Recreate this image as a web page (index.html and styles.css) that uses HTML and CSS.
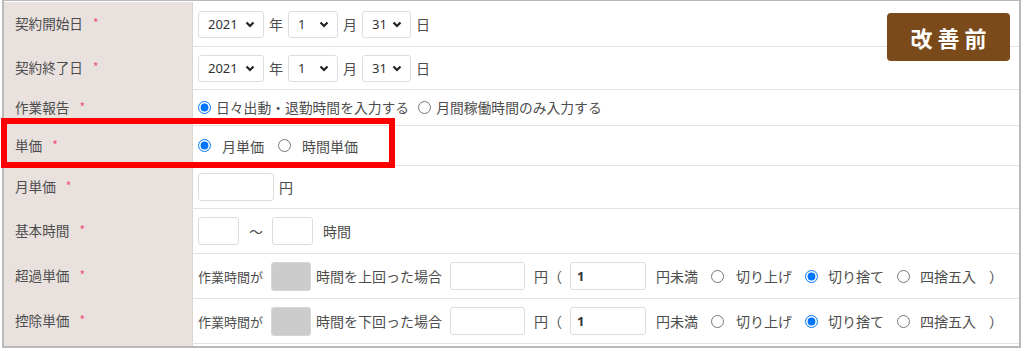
FILE: index.html
```html
<!DOCTYPE html>
<html lang="ja">

<head>
    <meta charset="UTF-8">
    <title>契約情報</title>
    <link rel="stylesheet" href="styles.css">
</head>

<body>
    <div class="frame">
        <div class="form">
            <div class="form-row row-1">
                <div class="form-label">契約開始日<span class="req">*</span></div>
                <div class="form-field">
                    <div class="select w-year">2021<svg viewBox="0 0 10 7"><path d="M1.5 1.5 5 5l3.5-3.5"/></svg></div>
                    <span class="unit">年</span>
                    <div class="select w-month">1<svg viewBox="0 0 10 7"><path d="M1.5 1.5 5 5l3.5-3.5"/></svg></div>
                    <span class="unit">月</span>
                    <div class="select w-day">31<svg viewBox="0 0 10 7"><path d="M1.5 1.5 5 5l3.5-3.5"/></svg></div>
                    <span class="unit">日</span>
                </div>
            </div>
            <div class="form-row row-2">
                <div class="form-label">契約終了日<span class="req">*</span></div>
                <div class="form-field">
                    <div class="select w-year">2021<svg viewBox="0 0 10 7"><path d="M1.5 1.5 5 5l3.5-3.5"/></svg></div>
                    <span class="unit">年</span>
                    <div class="select w-month">1<svg viewBox="0 0 10 7"><path d="M1.5 1.5 5 5l3.5-3.5"/></svg></div>
                    <span class="unit">月</span>
                    <div class="select w-day">31<svg viewBox="0 0 10 7"><path d="M1.5 1.5 5 5l3.5-3.5"/></svg></div>
                    <span class="unit">日</span>
                </div>
            </div>
            <div class="form-row row-3">
                <div class="form-label">作業報告<span class="req">*</span></div>
                <div class="form-field report">
                    <label class="radio"><input type="radio" name="report" checked>日々出動・退勤時間を入力する</label>
                    <label class="radio"><input type="radio" name="report">月間稼働時間のみ入力する</label>
                </div>
            </div>
            <div class="form-row row-4">
                <div class="form-label">単価<span class="req">*</span></div>
                <div class="form-field">
                    <label class="radio wide"><input type="radio" name="price" checked>月単価</label>
                    <label class="radio wide"><input type="radio" name="price">時間単価</label>
                </div>
            </div>
            <div class="form-row row-5">
                <div class="form-label">月単価<span class="req">*</span></div>
                <div class="form-field">
                    <input type="text" class="text w-76">
                    <span class="unit">円</span>
                </div>
            </div>
            <div class="form-row row-6">
                <div class="form-label">基本時間<span class="req">*</span></div>
                <div class="form-field">
                    <input type="text" class="text w-41">
                    <span class="unit tilde">～</span>
                    <input type="text" class="text w-41">
                    <span class="unit hours">時間</span>
                </div>
            </div>
            <div class="form-row row-7">
                <div class="form-label">超過単価<span class="req">*</span></div>
                <div class="form-field rate">
                    <span class="lead">作業時間が</span>
                    <span class="disabled-box"></span>
                    <span>時間を上回った場合</span>
                    <input type="text" class="text amount">
                    <span class="paren">円（</span>
                    <input type="text" class="text unit-input" value="1">
                    <span>円未満</span>
                    <label class="radio round"><input type="radio" name="over">切り上げ</label>
                    <label class="radio round"><input type="radio" name="over" checked>切り捨て</label>
                    <label class="radio round"><input type="radio" name="over">四捨五入</label>
                    <span class="close">）</span>
                </div>
            </div>
            <div class="form-row row-8">
                <div class="form-label">控除単価<span class="req">*</span></div>
                <div class="form-field rate">
                    <span class="lead">作業時間が</span>
                    <span class="disabled-box"></span>
                    <span>時間を下回った場合</span>
                    <input type="text" class="text amount">
                    <span class="paren">円（</span>
                    <input type="text" class="text unit-input" value="1">
                    <span>円未満</span>
                    <label class="radio round"><input type="radio" name="under">切り上げ</label>
                    <label class="radio round"><input type="radio" name="under" checked>切り捨て</label>
                    <label class="radio round"><input type="radio" name="under">四捨五入</label>
                    <span class="close">）</span>
                </div>
            </div>
            <div class="form-row row-9">
                <div class="form-label"></div>
                <div class="form-field"></div>
            </div>
        </div>

        <div class="badge">改善前</div>
        <div class="highlight"></div>
    </div>
</body>

</html>
```

FILE: styles.css
```css
html,
body {
    margin: 0;
    padding: 0;
    background: #ffffff;
}

body {
    font-family: "Noto Sans CJK JP", "Noto Sans", sans-serif;
    font-size: 14px;
    color: #4d4d4d;
}

.frame {
    position: relative;
    width: 1015px;
    height: 344px;
    margin-left: 2px;
    border: 2px solid #b9b9b9;
    border-top-width: 1px;
    padding-top: 1px;
}

.form {
    height: 344px;
    overflow: hidden;
}

.form-row {
    display: flex;
    border-bottom: 1px solid #e7e1de;
}

.row-1 { height: 44px; }
.row-2 { height: 42px; }
.row-3 { height: 35px; }
.row-4 { height: 39px; }
.row-5 { height: 42px; }
.row-6 { height: 44px; }
.row-7 { height: 44px; }
.row-8 { height: 44px; }
.row-9 { height: 20px; border-bottom: 0; }

.form-label {
    width: 177px;
    flex: none;
    background: #e8e1de;
    border-right: 1px solid #ddd4d0;
    padding-left: 11px;
    display: flex;
    align-items: center;
    line-height: 1;
    font-size: 13.6px;
}

.req {
    color: #f0507a;
    font-size: 12px;
    margin-left: 10px;
    position: relative;
    top: -1px;
}

.form-field {
    flex: 1;
    display: flex;
    align-items: center;
    padding-left: 5px;
    line-height: 1;
}

.select {
    height: 27px;
    box-sizing: border-box;
    border: 1px solid #dedede;
    border-radius: 3px;
    display: flex;
    align-items: center;
    justify-content: space-between;
    padding: 0 8px 0 9px;
    color: #333;
    font-family: "Noto Sans", sans-serif;
    font-size: 13px;
}

.select svg {
    width: 10px;
    height: 7px;
    fill: none;
    stroke: #222;
    stroke-width: 2.2;
}

.w-year { width: 66px; }
.w-month { width: 50px; }
.w-day { width: 49px; }

.unit {
    margin: 0 5px;
}

.tilde {
    margin: 0 9px 0 10px;
}

.hours {
    margin-left: 10px;
}

.radio {
    display: flex;
    align-items: center;
}

.radio input {
    margin: 0;
    width: 13px;
    height: 13px;
    flex: none;
}

.report {
    font-size: 13.8px;
}

.report .radio input {
    margin-right: 5px;
}

.report .radio + .radio {
    margin-left: 9px;
}

.radio.wide input {
    margin-right: 11px;
}

.radio.wide + .radio.wide {
    margin-left: 14px;
}

.text {
    height: 28px;
    box-sizing: border-box;
    border: 1px solid #e0dcd9;
    border-radius: 3px;
    padding: 0 6px;
    font-family: "Noto Sans", sans-serif;
    font-size: 13px;
    font-weight: bold;
    color: #333;
    outline: none;
}

.w-76 { width: 76px; }
.w-41 { width: 41px; }

.rate .lead {
    font-size: 13px;
}

.disabled-box {
    width: 40px;
    height: 29px;
    box-sizing: border-box;
    background: #cccccc;
    border: 1px solid #d6d6d6;
    border-radius: 3px;
    margin: 0 5px 0 8px;
}

.rate .amount {
    width: 75px;
    margin: 0 9px 0 8px;
}

.rate .unit-input {
    width: 76px;
    margin: 0 10px 0 8px;
}

.rate .round {
    margin-left: 13px;
}

.rate .round input {
    margin-right: 12px;
}

.rate .round + .round {
    margin-left: 13px;
}

.rate .round + .round input {
    margin-right: 10px;
}

.close {
    margin-left: 13px;
}

.badge {
    position: absolute;
    left: 883px;
    top: 12px;
    width: 123px;
    height: 48px;
    background: #7b4a1a;
    border-radius: 4px;
    color: #ffffff;
    font-size: 22px;
    font-weight: bold;
    letter-spacing: 5px;
    display: flex;
    align-items: center;
    justify-content: center;
    padding-left: 5px;
    box-sizing: border-box;
}

.highlight {
    position: absolute;
    left: -3px;
    top: 117px;
    width: 394px;
    height: 50px;
    border: 6px solid #ff0000;
    box-sizing: border-box;
}
```
